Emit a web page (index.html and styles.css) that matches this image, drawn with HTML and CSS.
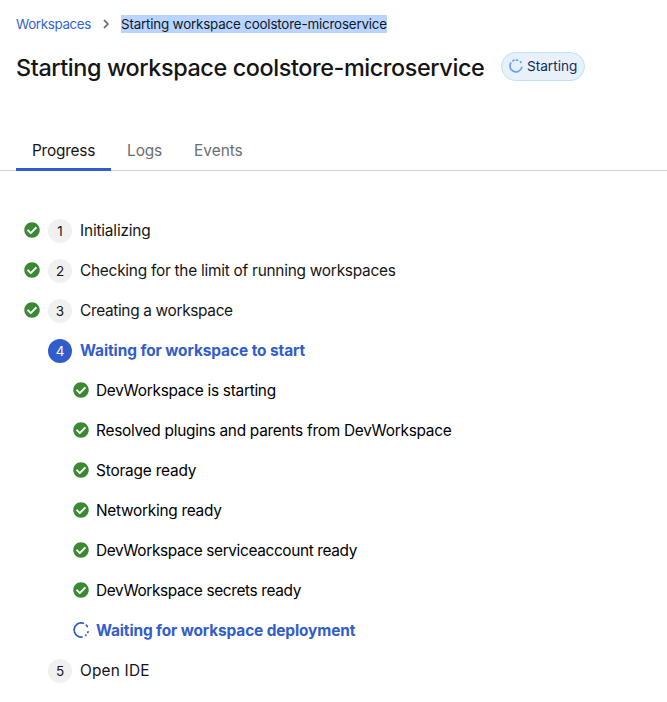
FILE: index.html
```html
<!DOCTYPE html>
<html lang="en">
<head>
<meta charset="utf-8">
<title>Starting workspace</title>
<link rel="stylesheet" href="styles.css">
</head>
<body>
<svg class="defs" aria-hidden="true">
  <symbol id="check" viewBox="0 0 512 512"><path d="M504 256c0 136.967-111.033 248-248 248S8 392.967 8 256 119.033 8 256 8s248 111.033 248 248zM227.314 387.314l184-184c6.248-6.248 6.248-16.379 0-22.627l-22.627-22.627c-6.248-6.249-16.379-6.249-22.628 0L216 308.118l-70.059-70.059c-6.248-6.248-16.379-6.248-22.628 0l-22.627 22.627c-6.248 6.248-6.248 16.379 0 22.627l104 104c6.249 6.249 16.379 6.249 22.628.001z"/></symbol>
</svg>
<header class="page-header">
  <nav class="breadcrumb">
    <a class="crumb-link">Workspaces</a>
    <svg class="chevron" viewBox="0 0 8 10"><path d="M2 1l4 4-4 4"/></svg>
    <span class="selected">Starting workspace coolstore-microservice</span>
  </nav>
  <div class="title-row">
    <h1>Starting workspace coolstore-microservice</h1>
    <span class="status">
      <svg class="status-icon" viewBox="0 0 16 16"><path d="M2 4.5A6.8 6.8 0 0 0 4.5 13.8A6.8 6.8 0 0 0 14.6 9.6"/><path d="M4.6 2l1.2-.6M8.6 1.4h1M13.2 3.2l.6.6"/></svg>
      <span>Starting</span>
    </span>
  </div>
</header>
<div class="tabs">
  <div class="tab tab-active">Progress</div>
  <div class="tab tab-logs">Logs</div>
  <div class="tab">Events</div>
</div>
<ol class="steps">
  <li class="step"><svg class="check"><use href="#check"/></svg><span class="num">1</span><span class="s1">Initializing</span></li>
  <li class="step"><svg class="check"><use href="#check"/></svg><span class="num">2</span><span class="s2">Checking for the limit of running workspaces</span></li>
  <li class="step"><svg class="check"><use href="#check"/></svg><span class="num">3</span><span class="s3">Creating a workspace</span></li>
  <li class="step pending"><span class="num num-active">4</span><span class="active s4">Waiting for workspace to start</span></li>
  <li class="step sub"><svg class="check"><use href="#check"/></svg><span class="s5">DevWorkspace is starting</span></li>
  <li class="step sub"><svg class="check"><use href="#check"/></svg><span class="s6">Resolved plugins and parents from DevWorkspace</span></li>
  <li class="step sub"><svg class="check"><use href="#check"/></svg><span class="s7">Storage ready</span></li>
  <li class="step sub"><svg class="check"><use href="#check"/></svg><span class="s8">Networking ready</span></li>
  <li class="step sub"><svg class="check"><use href="#check"/></svg><span class="s9">DevWorkspace serviceaccount ready</span></li>
  <li class="step sub"><svg class="check"><use href="#check"/></svg><span class="s10">DevWorkspace secrets ready</span></li>
  <li class="step sub"><svg class="spinner" viewBox="0 0 16 16"><path d="M10.4 1.2A7.1 7.1 0 1 0 9.2 15"/><path d="M13.4 3.2l.9 1.3M15 9.8l-.2.6M12.9 13.2l-.2.2"/></svg><span class="active s11">Waiting for workspace deployment</span></li>
  <li class="step pending"><span class="num">5</span><span class="s12">Open IDE</span></li>
</ol>
</body>
</html>
```
FILE: styles.css
```css
body { margin: 0; background: #fff; color: #151515; font-family: Inter, "Liberation Sans", sans-serif; font-size: 15.4px; line-height: 24px; }
.defs { position: absolute; width: 0; height: 0; }
.page-header { padding: 14px 16px 0; }
.breadcrumb { display: flex; align-items: center; height: 20px; font-size: 13.4px; line-height: 18px; white-space: nowrap; }
.crumb-link { width: 75px; color: #3662d3; letter-spacing: -.36px; }
.chevron { width: 8px; height: 10px; margin: 0 11px; fill: none; stroke: #77797c; stroke-width: 1.8; }
.selected { background: #b9d4ff; color: #101828; letter-spacing: -.19px; }
.title-row { display: flex; align-items: center; height: 32px; margin-top: 16px; }
h1 { width: 485px; margin: 0; padding-top: 3px; font-size: 23.4px; font-weight: 500; line-height: 32px; letter-spacing: -.4px; white-space: nowrap; }
.status { box-sizing: border-box; display: flex; align-items: center; width: 84px; height: 29px; padding-left: 7px; border: 1px solid #bee1f4; border-radius: 15px; background: #e8f0f9; color: #142b5d; font-size: 13.6px; }
.status-icon { width: 14px; height: 14px; margin-right: 4px; fill: none; stroke: #67a3f9; stroke-width: 2; stroke-linecap: round; }
.tabs { display: flex; height: 40px; margin-top: 48px; padding-left: 16px; border-bottom: 1px solid #d2d2d2; }
.tab { box-sizing: border-box; height: 41px; padding: 9px 16px 0; color: #6a6e73; }
.tab-active { border-bottom: 3px solid #315dcc; color: #151515; letter-spacing: -.22px; }
.tab-logs { letter-spacing: -.12px; }
.steps { margin: 0; padding: 40px 0 0; list-style: none; }
.step { display: flex; align-items: center; height: 40px; padding-left: 24px; white-space: nowrap; }
.pending { padding-left: 48px; }
.sub { padding-left: 73px; color: #000; }
.check, .spinner { width: 16px; height: 16px; margin: 0 8px 2px 0; }
.check { fill: #3b8a32; }
.sub .check, .spinner { margin-right: 7px; }
.num { width: 24px; height: 24px; margin-right: 8px; border-radius: 50%; background: #f0f0f0; font-size: 13.5px; text-align: center; }
.num-active { background: #315dcc; color: #fff; }
.active { color: #315dcc; font-weight: 700; }
.spinner { fill: none; stroke: #315dcc; stroke-width: 1.7; stroke-linecap: round; }
.s1 { letter-spacing: -.17px; }
.s2 { letter-spacing: -.245px; }
.s3 { letter-spacing: -.325px; }
.s4 { letter-spacing: -.067px; }
.s5 { letter-spacing: -.27px; }
.s6 { letter-spacing: -.26px; }
.s7 { letter-spacing: -.18px; }
.s8 { letter-spacing: -.27px; }
.s9 { letter-spacing: -.36px; }
.s10 { letter-spacing: -.35px; }
.s11 { letter-spacing: -.11px; }
.s12 { letter-spacing: .2px; }
```
